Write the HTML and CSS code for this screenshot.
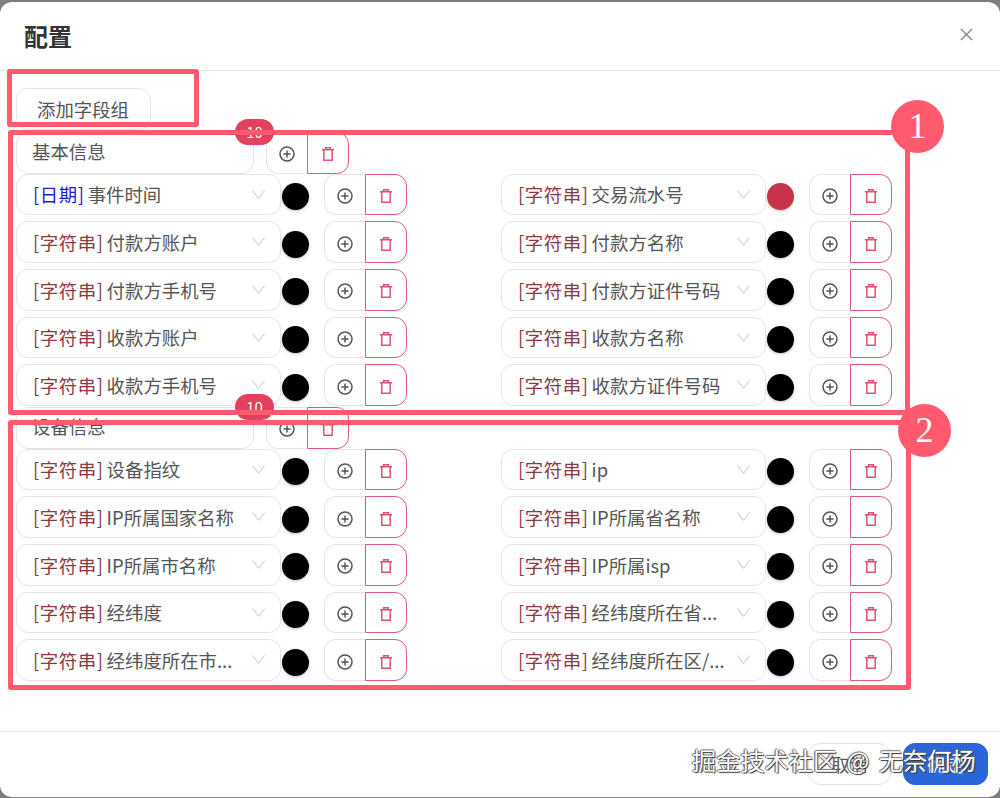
FILE: index.html
```html
<!DOCTYPE html>
<html lang="zh-CN">
<head>
  <meta charset="UTF-8">
  <title>配置</title>
  <link rel="stylesheet" href="styles.css">
</head>
<body>
  <svg class="defs" width="0" height="0">
    <symbol id="plus" viewBox="0 0 16 16">
      <circle cx="8" cy="8" r="7" fill="none" stroke="currentColor" stroke-width="1.5"/>
      <path d="M8 4.4v7.2M4.4 8h7.2" fill="none" stroke="currentColor" stroke-width="1.5"/>
    </symbol>
    <symbol id="trash" viewBox="0 0 12 14">
      <path d="M0 2.8h12M3.6 2.8V.8h4.8v2M1.8 2.8v10.4h8.4V2.8" fill="none" stroke="currentColor" stroke-width="1.5"/>
    </symbol>
    <symbol id="chev" viewBox="0 0 13 9">
      <path d="M.5.5 6.5 8.4 12.5.5" fill="none" stroke="currentColor" stroke-width="1"/>
    </symbol>
    <symbol id="cross" viewBox="0 0 14 14">
      <path d="M1 1l12 12M13 1 1 13" fill="none" stroke="currentColor" stroke-width="1.5"/>
    </symbol>
  </svg>

  <div class="modal">
    <div class="modal-head">
      <h1>配置</h1>
      <svg class="close"><use href="#cross"/></svg>
    </div>

    <div class="modal-body">
      <button class="add-group">添加字段组</button>

      <div class="group">
        <div class="name-row">
          <div class="name-input">基本信息<span class="badge">10</span></div>
          <div class="btns">
            <span class="btn"><svg class="ico-plus"><use href="#plus"/></svg></span>
            <span class="btn del"><svg class="ico-trash"><use href="#trash"/></svg></span>
          </div>
        </div>
        <div class="fields">
          <div class="field"><div class="select"><span class="type date">[日期]</span><span class="label">事件时间</span><svg class="chev"><use href="#chev"/></svg></div><i class="dot"></i><div class="btns"><span class="btn"><svg class="ico-plus"><use href="#plus"/></svg></span><span class="btn del"><svg class="ico-trash"><use href="#trash"/></svg></span></div></div>
          <div class="field"><div class="select"><span class="type">[字符串]</span><span class="label">交易流水号</span><svg class="chev"><use href="#chev"/></svg></div><i class="dot red"></i><div class="btns"><span class="btn"><svg class="ico-plus"><use href="#plus"/></svg></span><span class="btn del"><svg class="ico-trash"><use href="#trash"/></svg></span></div></div>
          <div class="field"><div class="select"><span class="type">[字符串]</span><span class="label">付款方账户</span><svg class="chev"><use href="#chev"/></svg></div><i class="dot"></i><div class="btns"><span class="btn"><svg class="ico-plus"><use href="#plus"/></svg></span><span class="btn del"><svg class="ico-trash"><use href="#trash"/></svg></span></div></div>
          <div class="field"><div class="select"><span class="type">[字符串]</span><span class="label">付款方名称</span><svg class="chev"><use href="#chev"/></svg></div><i class="dot"></i><div class="btns"><span class="btn"><svg class="ico-plus"><use href="#plus"/></svg></span><span class="btn del"><svg class="ico-trash"><use href="#trash"/></svg></span></div></div>
          <div class="field"><div class="select"><span class="type">[字符串]</span><span class="label">付款方手机号</span><svg class="chev"><use href="#chev"/></svg></div><i class="dot"></i><div class="btns"><span class="btn"><svg class="ico-plus"><use href="#plus"/></svg></span><span class="btn del"><svg class="ico-trash"><use href="#trash"/></svg></span></div></div>
          <div class="field"><div class="select"><span class="type">[字符串]</span><span class="label">付款方证件号码</span><svg class="chev"><use href="#chev"/></svg></div><i class="dot"></i><div class="btns"><span class="btn"><svg class="ico-plus"><use href="#plus"/></svg></span><span class="btn del"><svg class="ico-trash"><use href="#trash"/></svg></span></div></div>
          <div class="field"><div class="select"><span class="type">[字符串]</span><span class="label">收款方账户</span><svg class="chev"><use href="#chev"/></svg></div><i class="dot"></i><div class="btns"><span class="btn"><svg class="ico-plus"><use href="#plus"/></svg></span><span class="btn del"><svg class="ico-trash"><use href="#trash"/></svg></span></div></div>
          <div class="field"><div class="select"><span class="type">[字符串]</span><span class="label">收款方名称</span><svg class="chev"><use href="#chev"/></svg></div><i class="dot"></i><div class="btns"><span class="btn"><svg class="ico-plus"><use href="#plus"/></svg></span><span class="btn del"><svg class="ico-trash"><use href="#trash"/></svg></span></div></div>
          <div class="field"><div class="select"><span class="type">[字符串]</span><span class="label">收款方手机号</span><svg class="chev"><use href="#chev"/></svg></div><i class="dot"></i><div class="btns"><span class="btn"><svg class="ico-plus"><use href="#plus"/></svg></span><span class="btn del"><svg class="ico-trash"><use href="#trash"/></svg></span></div></div>
          <div class="field"><div class="select"><span class="type">[字符串]</span><span class="label">收款方证件号码</span><svg class="chev"><use href="#chev"/></svg></div><i class="dot"></i><div class="btns"><span class="btn"><svg class="ico-plus"><use href="#plus"/></svg></span><span class="btn del"><svg class="ico-trash"><use href="#trash"/></svg></span></div></div>
        </div>
      </div>

      <div class="group">
        <div class="name-row">
          <div class="name-input">设备信息<span class="badge">10</span></div>
          <div class="btns">
            <span class="btn"><svg class="ico-plus"><use href="#plus"/></svg></span>
            <span class="btn del"><svg class="ico-trash"><use href="#trash"/></svg></span>
          </div>
        </div>
        <div class="fields">
          <div class="field"><div class="select"><span class="type">[字符串]</span><span class="label">设备指纹</span><svg class="chev"><use href="#chev"/></svg></div><i class="dot"></i><div class="btns"><span class="btn"><svg class="ico-plus"><use href="#plus"/></svg></span><span class="btn del"><svg class="ico-trash"><use href="#trash"/></svg></span></div></div>
          <div class="field"><div class="select"><span class="type">[字符串]</span><span class="label">ip</span><svg class="chev"><use href="#chev"/></svg></div><i class="dot"></i><div class="btns"><span class="btn"><svg class="ico-plus"><use href="#plus"/></svg></span><span class="btn del"><svg class="ico-trash"><use href="#trash"/></svg></span></div></div>
          <div class="field"><div class="select"><span class="type">[字符串]</span><span class="label">IP所属国家名称</span><svg class="chev"><use href="#chev"/></svg></div><i class="dot"></i><div class="btns"><span class="btn"><svg class="ico-plus"><use href="#plus"/></svg></span><span class="btn del"><svg class="ico-trash"><use href="#trash"/></svg></span></div></div>
          <div class="field"><div class="select"><span class="type">[字符串]</span><span class="label">IP所属省名称</span><svg class="chev"><use href="#chev"/></svg></div><i class="dot"></i><div class="btns"><span class="btn"><svg class="ico-plus"><use href="#plus"/></svg></span><span class="btn del"><svg class="ico-trash"><use href="#trash"/></svg></span></div></div>
          <div class="field"><div class="select"><span class="type">[字符串]</span><span class="label">IP所属市名称</span><svg class="chev"><use href="#chev"/></svg></div><i class="dot"></i><div class="btns"><span class="btn"><svg class="ico-plus"><use href="#plus"/></svg></span><span class="btn del"><svg class="ico-trash"><use href="#trash"/></svg></span></div></div>
          <div class="field"><div class="select"><span class="type">[字符串]</span><span class="label">IP所属isp</span><svg class="chev"><use href="#chev"/></svg></div><i class="dot"></i><div class="btns"><span class="btn"><svg class="ico-plus"><use href="#plus"/></svg></span><span class="btn del"><svg class="ico-trash"><use href="#trash"/></svg></span></div></div>
          <div class="field"><div class="select"><span class="type">[字符串]</span><span class="label">经纬度</span><svg class="chev"><use href="#chev"/></svg></div><i class="dot"></i><div class="btns"><span class="btn"><svg class="ico-plus"><use href="#plus"/></svg></span><span class="btn del"><svg class="ico-trash"><use href="#trash"/></svg></span></div></div>
          <div class="field"><div class="select"><span class="type">[字符串]</span><span class="label">经纬度所在省...</span><svg class="chev"><use href="#chev"/></svg></div><i class="dot"></i><div class="btns"><span class="btn"><svg class="ico-plus"><use href="#plus"/></svg></span><span class="btn del"><svg class="ico-trash"><use href="#trash"/></svg></span></div></div>
          <div class="field"><div class="select"><span class="type">[字符串]</span><span class="label">经纬度所在市...</span><svg class="chev"><use href="#chev"/></svg></div><i class="dot"></i><div class="btns"><span class="btn"><svg class="ico-plus"><use href="#plus"/></svg></span><span class="btn del"><svg class="ico-trash"><use href="#trash"/></svg></span></div></div>
          <div class="field"><div class="select"><span class="type">[字符串]</span><span class="label">经纬度所在区/...</span><svg class="chev"><use href="#chev"/></svg></div><i class="dot"></i><div class="btns"><span class="btn"><svg class="ico-plus"><use href="#plus"/></svg></span><span class="btn del"><svg class="ico-trash"><use href="#trash"/></svg></span></div></div>
        </div>
      </div>
    </div>

    <div class="modal-foot">
      <button class="foot-btn">取消</button>
      <button class="foot-btn primary">确定</button>
    </div>
  </div>

  <!-- annotations drawn over the screenshot -->
  <div class="mark mark-add"></div>
  <div class="mark mark-one"></div>
  <div class="mark mark-two"></div>
  <div class="num num-one">1</div>
  <div class="num num-two">2</div>
  <div class="watermark">掘金技术社区 @ 无奈何杨</div>
</body>
</html>
```

FILE: styles.css
```css
html {
  box-sizing: border-box;
}
*, *:before, *:after {
  box-sizing: inherit;
}
body {
  margin: 0;
  width: 1000px;
  height: 798px;
  overflow: hidden;
  position: relative;
  padding: 2px 0 1px;
  background: #7d7d7d;
  color: #555;
  font-family: "Noto Sans CJK SC", "Noto Sans", sans-serif;
  font-size: 18.4px;
}

.defs {
  position: absolute;
}

.modal {
  height: 795px;
  background: #fff;
  border-radius: 12px;
  display: flex;
  flex-direction: column;
}

.modal-head {
  height: 69px;
  flex: none;
  padding: 0 27px 0 24px;
  display: flex;
  align-items: center;
  justify-content: space-between;
  border-bottom: 1px solid #e6e6e6;
}
.modal-head h1 {
  margin: -2px 0 0;
  font-size: 24px;
  font-weight: 700;
  color: #333;
}
.close {
  width: 13px;
  height: 13px;
  margin-top: -4px;
  color: #8a8a8a;
}

.modal-body {
  flex: 1;
  padding: 17px 16px 0;
}

.add-group {
  display: block;
  width: 135px;
  height: 42px;
  margin: 0 0 2px;
  padding: 0 1px 0 0;
  background: #fff;
  border: 1px solid #e4e4e4;
  border-radius: 12px;
  color: #555;
  font: inherit;
}

.name-row {
  display: flex;
  gap: 12px;
  height: 41.6px;
}
.name-input {
  width: 238px;
  position: relative;
  display: flex;
  align-items: center;
  padding: 0 0 3px 15px;
  background: #fff;
  border: 1px solid #e4e4e4;
  border-radius: 12px;
}
.badge {
  position: absolute;
  top: -14px;
  right: -21px;
  width: 39px;
  height: 26px;
  border-radius: 13px;
  background: #e2405c;
  color: #fff;
  font-size: 15px;
  line-height: 26px;
  text-align: center;
  z-index: 1;
}

.fields {
  display: grid;
  grid-template-columns: 391px 391px;
  column-gap: 94px;
  row-gap: 6.1px;
  margin-bottom: 1px;
}
.field {
  display: flex;
  align-items: center;
  height: 41.6px;
}
.select {
  width: 265px;
  height: 100%;
  flex: none;
  position: relative;
  padding-left: 16px;
  display: flex;
  align-items: center;
  white-space: pre;
  background: #fff;
  border: 1px solid #e4e4e4;
  border-radius: 12px;
}
.type {
  color: #8c3a3f;
  letter-spacing: 0.6px;
}
.label {
  margin-left: 3px;
}
.chev {
  position: absolute;
  right: 15px;
  top: 15px;
  width: 13px;
  height: 9px;
  color: #c4c4c4;
}
.type.date {
  color: #1c1cd6;
}
.dot {
  width: 27px;
  height: 27px;
  flex: none;
  margin: 4px 15px 0 1px;
  border-radius: 50%;
  background: #000;
  box-shadow: 0 1px 3px rgba(0,0,0,0.25);
}
.dot.red {
  background: #c8324a;
}

.btns {
  display: flex;
  height: 100%;
  flex: none;
}
.btn {
  width: 41px;
  height: 100%;
  padding-top: 3px;
  display: flex;
  align-items: center;
  justify-content: center;
  color: #555;
  background: #fff;
  border: 1px solid #e4e4e4;
  border-right: none;
  border-radius: 12px 0 0 12px;
}
.btn.del {
  width: 42px;
  color: #e2506e;
  border: 1px solid #df5a74;
  border-radius: 0 12px 12px 0;
}
.ico-plus {
  width: 16px;
  height: 16px;
}
.ico-trash {
  width: 12px;
  height: 14px;
}

.modal-foot {
  height: 66px;
  flex: none;
  display: flex;
  justify-content: flex-end;
  gap: 12px;
  padding: 11px 12px 0 0;
  border-top: 1px solid #e6e6e6;
}
.foot-btn {
  width: 83px;
  height: 42px;
  padding: 0;
  background: #fff;
  border: 1px solid #e4e4e4;
  border-radius: 12px;
  color: #555;
  font: inherit;
}
.foot-btn.primary {
  width: 85px;
  background: #2b66d9;
  border-color: #2b66d9;
  color: #fff;
}

.mark {
  position: absolute;
  border: 5px solid #ff5a6e;
  border-radius: 3px;
  z-index: 2;
}
.mark-add {
  left: 7px;
  top: 69px;
  width: 192px;
  height: 58px;
}
.mark-one {
  left: 8px;
  top: 130px;
  width: 902px;
  height: 285px;
}
.mark-two {
  left: 8px;
  top: 420px;
  width: 903px;
  height: 270px;
}
.num {
  position: absolute;
  width: 53px;
  height: 53px;
  border-radius: 50%;
  background: #ff5a6e;
  color: #fff;
  font-family: "Liberation Serif", serif;
  font-size: 36px;
  line-height: 53px;
  text-align: center;
  z-index: 3;
}
.num-one {
  left: 891px;
  top: 100px;
}
.num-two {
  left: 898px;
  top: 404px;
}

.watermark {
  position: absolute;
  left: 692px;
  top: 743px;
  z-index: 4;
  white-space: pre;
  color: #fff;
  font-size: 24.2px;
  line-height: 34px;
  word-spacing: 4px;
  text-shadow: 1px 1px 1px #333, -1px 0 1px #555, 0 -1px 1px #777;
}
```
